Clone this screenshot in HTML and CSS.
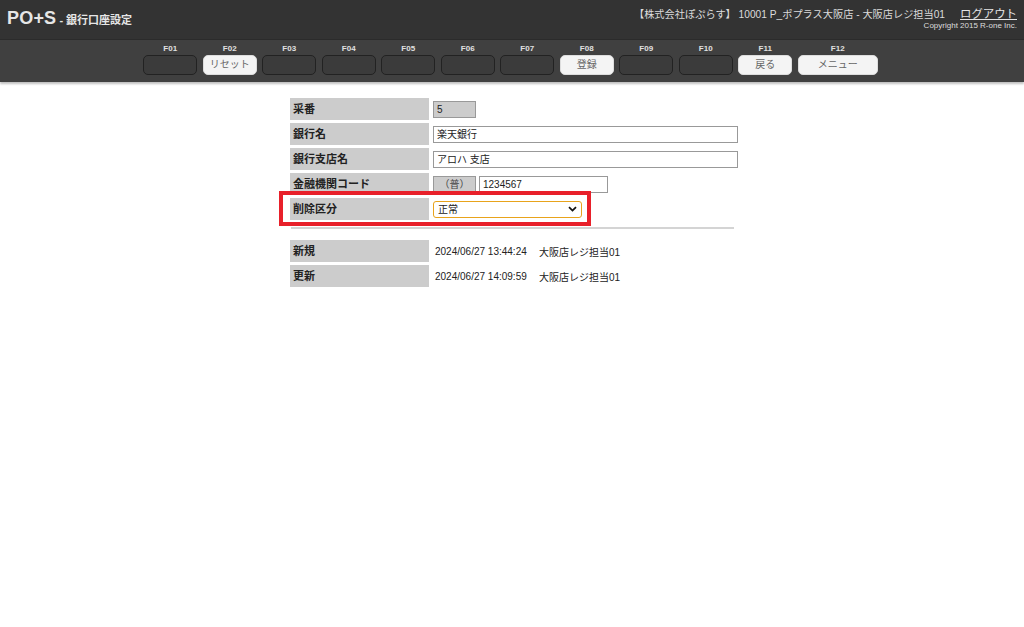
FILE: index.html
```html
<!DOCTYPE html>
<html lang="ja">
<head>
<meta charset="utf-8">
<title>銀行口座設定</title>
<link rel="stylesheet" href="styles.css">
</head>
<body>
<header class="top">
  <div class="brand"><span class="logo">PO+S</span><span class="page"> - 銀行口座設定</span></div>
  <div class="user">
    <div class="user-line"><span class="who">【株式会社ぽぷらす】 10001 P_ポプラス大阪店 - 大阪店レジ担当01</span><a class="logout" href="#">ログアウト</a></div>
    <div class="copy">Copyright 2015 R-one Inc.</div>
  </div>
</header>
<nav class="fkeys">
  <div class="fk"><span class="fl">F01</span><span class="fb"></span></div>
  <div class="fk"><span class="fl">F02</span><span class="fb on">リセット</span></div>
  <div class="fk"><span class="fl">F03</span><span class="fb"></span></div>
  <div class="fk"><span class="fl">F04</span><span class="fb"></span></div>
  <div class="fk"><span class="fl">F05</span><span class="fb"></span></div>
  <div class="fk"><span class="fl">F06</span><span class="fb"></span></div>
  <div class="fk"><span class="fl">F07</span><span class="fb"></span></div>
  <div class="fk"><span class="fl">F08</span><span class="fb on">登録</span></div>
  <div class="fk"><span class="fl">F09</span><span class="fb"></span></div>
  <div class="fk"><span class="fl">F10</span><span class="fb"></span></div>
  <div class="fk"><span class="fl">F11</span><span class="fb on">戻る</span></div>
  <div class="fk wide"><span class="fl">F12</span><span class="fb on">メニュー</span></div>
</nav>
<main class="content">
  <div class="form">
    <div class="row"><div class="lbl">采番</div><div class="val"><span class="box ro short">5</span></div></div>
    <div class="row"><div class="lbl">銀行名</div><div class="val"><span class="box long">楽天銀行</span></div></div>
    <div class="row"><div class="lbl">銀行支店名</div><div class="val"><span class="box long">アロハ 支店</span></div></div>
    <div class="row"><div class="lbl">金融機関コード</div><div class="val"><span class="box ro short center">（普）</span><span class="box mid">1234567</span></div></div>
    <div class="row hl"><div class="lbl">削除区分</div><div class="val"><span class="sel">正常<svg class="chev" width="9" height="6" viewBox="0 0 9 6"><path d="M1 1.2 L4.5 4.6 L8 1.2" fill="none" stroke="#111" stroke-width="1.8"/></svg></span></div><div class="mark"></div></div>
    <div class="rule"></div>
    <div class="row"><div class="lbl">新規</div><div class="val txt"><span class="dt">2024/06/27 13:44:24</span><span>大阪店レジ担当01</span></div></div>
    <div class="row"><div class="lbl">更新</div><div class="val txt"><span class="dt">2024/06/27 14:09:59</span><span>大阪店レジ担当01</span></div></div>
  </div>
</main>
</body>
</html>
```
FILE: styles.css
```css
* { box-sizing: border-box; }
html, body { margin: 0; padding: 0; background: #fff; }
body { font-family: "Liberation Sans", "Noto Sans CJK JP", sans-serif; color: #222; }

.top {
  height: 40px;
  background: #333333;
  display: flex;
  justify-content: space-between;
  align-items: flex-start;
  padding: 0 7px 0 7px;
  border-bottom: 1px solid #2b2b2b;
}
.brand { padding-top: 8px; color: #e6e6e6; font-weight: bold; white-space: nowrap; }
.logo { font-size: 18px; letter-spacing: 0.2px; }
.page { font-size: 11px; }
.user { text-align: right; padding-top: 5px; color: #dcdcdc; }
.user-line { font-size: 10.2px; display: flex; align-items: baseline; justify-content: flex-end; }
.logout { color: #e6e6e6; font-size: 11.4px; margin-left: 15px; text-decoration: underline; }
.copy { font-size: 8px; margin-top: 0; color: #ddd; }

.fkeys {
  height: 42px;
  background: #404040;
  display: flex;
  justify-content: center;
  gap: 5.5px;
  padding: 3px 0 0 0;
  box-shadow: 0 2px 2px rgba(0,0,0,0.25);
  padding-right: 3px;
}
.fk { width: 54px; display: flex; flex-direction: column; align-items: center; }
.fk.wide { width: 80px; }
.fl { font-size: 8px; color: #e0e0e0; font-weight: bold; height: 12px; line-height: 11px; }
.fb {
  margin-top: 0;
  width: 100%;
  height: 20px;
  border: 1px solid #222;
  border-radius: 5px;
  background: #3b3b3b;
  font-size: 10px;
  line-height: 18px;
  text-align: center;
  color: #777;
}
.fb.on { background: #f4f4f4; border-color: #ddd; color: #666; }

.content { padding-top: 16px; }
.form { width: 448px; margin-left: 290px; }
.row { display: flex; height: 22px; margin-bottom: 3px; position: relative; }
.lbl {
  width: 139px;
  background: #cccccc;
  font-size: 11px;
  font-weight: bold;
  line-height: 22px;
  padding-left: 3px;
  color: #222;
}
.val { flex: 1; padding-left: 4px; display: flex; align-items: center; gap: 3px; }
.box {
  height: 17px;
  border: 1px solid #999;
  background: #fff;
  font-size: 10px;
  line-height: 15px;
  padding-left: 3px;
  color: #222;
}
.box.ro { background: #cccccc; border-color: #999; }
.box.short { width: 43px; }
.box.center { text-align: center; padding-left: 0; color: #444; }
.box.long { width: 305px; }
.box.mid { width: 129px; }
.sel {
  width: 149px;
  height: 17px;
  border: 1px solid #e8a31b;
  border-radius: 3px;
  font-size: 10px;
  line-height: 15px;
  padding: 0 4px 0 4px;
  display: flex;
  justify-content: space-between;
  align-items: center;
  background: #fff;
}
.chev { display: block; }
.row.hl { margin-top: 2px; }
.mark {
  position: absolute;
  left: -11px;
  top: -7px;
  width: 312px;
  height: 35px;
  border: 4px solid #e8202a;
  pointer-events: none;
}
.rule { height: 2px; background: #d4d4d4; width: 443px; margin: 7px 0 11px 1px; }
.val.txt { font-size: 10px; padding-left: 6px; gap: 0; color: #222; }
.dt { width: 104px; }
```
